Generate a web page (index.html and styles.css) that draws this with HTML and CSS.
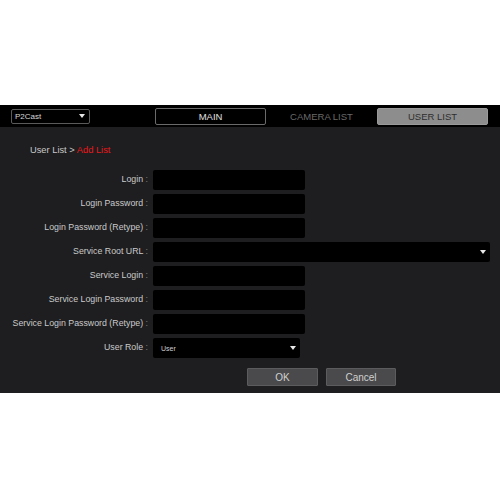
FILE: index.html
```html
<!DOCTYPE html>
<html>
<head>
<meta charset="utf-8">
<link rel="stylesheet" href="styles.css">
</head>
<body>
<div class="app">
  <div class="topbar">
    <div class="select site-select"><span>P2Cast</span><i class="tri"></i></div>
    <div class="tabs">
      <div class="tab tab-main">MAIN</div>
      <div class="tab tab-camera">CAMERA LIST</div>
      <div class="tab tab-user">USER LIST</div>
    </div>
  </div>
  <div class="panel">
    <div class="crumb">User List &gt; <span class="crumb-red">Add List</span></div>
    <div class="form">
      <label class="lbl">Login <span class="colon">:</span></label><div class="field w152"></div>
      <label class="lbl">Login Password <span class="colon">:</span></label><div class="field w152"></div>
      <label class="lbl">Login Password (Retype) <span class="colon">:</span></label><div class="field w152"></div>
      <label class="lbl">Service Root URL <span class="colon">:</span></label><div class="field w337 dd"><i class="tri"></i></div>
      <label class="lbl">Service Login <span class="colon">:</span></label><div class="field w152"></div>
      <label class="lbl">Service Login Password <span class="colon">:</span></label><div class="field w152"></div>
      <label class="lbl">Service Login Password (Retype) <span class="colon">:</span></label><div class="field w152"></div>
      <label class="lbl">User Role <span class="colon">:</span></label><div class="field w147 dd role"><span>User</span><i class="tri"></i></div>
    </div>
    <div class="actions">
      <div class="btn btn-ok">OK</div>
      <div class="btn btn-cancel">Cancel</div>
    </div>
  </div>
</div>
</body>
</html>
```
FILE: styles.css
```css
html, body {
  margin: 0;
  padding: 0;
  background: #ffffff;
  font-family: "Liberation Sans", Arial, sans-serif;
}
.app {
  margin-top: 105px;
}
.topbar {
  height: 22px;
  background: #000;
  display: flex;
  align-items: center;
  padding-left: 11px;
}
.select {
  box-sizing: border-box;
  border: 1px solid #5a5a5a;
  border-radius: 2px;
  display: flex;
  align-items: center;
  justify-content: space-between;
}
.site-select {
  width: 79px;
  height: 15px;
  padding: 0 4px 0 3px;
  font-size: 8px;
  color: #d8d8d8;
}
.tri {
  display: block;
  width: 0;
  height: 0;
  border-left: 3px solid transparent;
  border-right: 3px solid transparent;
  border-top: 4px solid #e8e8e8;
}
.tabs {
  display: flex;
  margin-left: 65px;
}
.tab {
  box-sizing: border-box;
  width: 111px;
  height: 17px;
  font-size: 9.5px;
  display: flex;
  align-items: center;
  justify-content: center;
  border-radius: 2px;
}
.tab-main {
  border: 1px solid #6a6a6a;
  color: #e0e0e0;
}
.tab-camera {
  color: #6a6a6a;
}
.tab-user {
  background: #8d8d8d;
  border: 1px solid #9a9a9a;
  color: #2e2e2e;
}
.panel {
  background: #1e1e20;
  height: 266px;
  box-sizing: border-box;
  padding-top: 16px;
}
.crumb {
  padding-left: 30px;
  height: 14px;
  line-height: 14px;
  font-size: 9.3px;
  color: #c8c8c8;
}
.crumb-red {
  color: #e8191c;
}
.form {
  margin-top: 13px;
  display: grid;
  grid-template-columns: 148px auto;
  column-gap: 5px;
  row-gap: 4px;
  justify-items: start;
}
.lbl {
  justify-self: end;
  font-size: 8.8px;
  color: #cacaca;
  line-height: 19px;
  white-space: nowrap;
}
.colon {
  color: #7a7a7a;
}
.field {
  height: 20px;
  background: #000;
  border-radius: 2px;
  box-sizing: border-box;
}
.w152 { width: 152px; }
.w337 { width: 337px; }
.w147 { width: 147px; }
.dd {
  display: flex;
  align-items: center;
  justify-content: flex-end;
  padding: 0 4px 0 8px;
}
.role {
  justify-content: space-between;
  font-size: 7px;
  color: #cfcfcf;
}
.actions {
  display: flex;
  gap: 8px;
  margin-top: 10px;
  margin-left: 247px;
}
.btn {
  box-sizing: border-box;
  height: 18px;
  background: #4a4a4c;
  border: 1px solid #5c5c5e;
  border-radius: 1px;
  color: #d0d0d0;
  font-size: 10px;
  display: flex;
  align-items: center;
  justify-content: center;
}
.btn-ok { width: 71px; }
.btn-cancel { width: 70px; }
```
